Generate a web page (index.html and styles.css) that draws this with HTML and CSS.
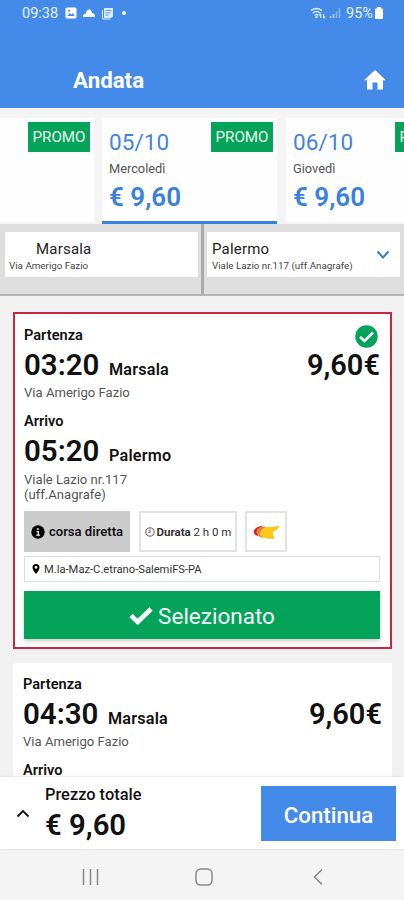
FILE: index.html
```
<!DOCTYPE html>
<html lang="it">
<head>
    <meta charset="UTF-8">
    <meta name="viewport" content="width=device-width, initial-scale=1.0">
    <title>Andata</title>
    <link rel="stylesheet" href="styles.css">
</head>
<body>
    <header>
        <div class="status">
            <span class="clock">09:38</span>
            <svg class="photo" width="12" height="12" viewBox="0 0 12 12"><rect x=".5" y=".5" width="11" height="11" rx="1.500" fill="#fff"/><path d="M2.500 9l2.200-3 1.600 1.800L7.800 6l2 3z" fill="#448ae8"/><circle cx="4" cy="3.700" r="1" fill="#448ae8"/></svg>
            <svg class="cloud" width="14" height="12" viewBox="0 0 14 12"><path d="M1 10Q1 6.500 4 6.500Q4.500 2.500 7 2.500Q9.500 2.500 10 6Q13 6.300 13 10z" fill="#fff"/></svg>
            <svg class="note" width="13" height="13" viewBox="0 0 13 13"><path d="M3 1h9v8.500l-2 1.500H3z" fill="#dcebff"/><path d="M1.500 3v9h8" fill="none" stroke="#dcebff"/><path d="M4.500 3.500h6M4.500 5.800h5M4.500 8h3" stroke="#448ae8" stroke-width=".8"/></svg>
            <span class="dot"></span>
            <svg class="wifi" width="19" height="14" viewBox="0 0 19 14"><path d="M2 4.700q5.500-4.500 11 0M3.700 7q3.800-3 7.600 0M5.500 9.200q2-1.500 4 0" fill="none" stroke="#d3ecf5" stroke-width="1.500"/><circle cx="7.500" cy="11" r="1.200" fill="#d3ecf5"/><path d="M11.700 12V8M11.700 7.500l-1.500 2M14.500 8v4M14.500 12.300l1.500-2" stroke="#d3ecf5" stroke-width="1.200"/></svg>
            <svg class="signal" width="12" height="12" viewBox="0 0 12 12"><path d="M1.500 11V9M4.500 11V7" stroke="#b9dcf3" stroke-width="1.500"/><path d="M7.500 11V4.500M10.500 11V1" stroke="#8abaf0" stroke-width="1.500"/></svg>
            <span class="percent">95%</span>
            <svg class="battery" width="8" height="12" viewBox="0 0 8 12"><path d="M2 0h4v1.500h1q1 0 1 1V11q0 1-1 1H1q-1 0-1-1V2.500q0-1 1-1h1z" fill="#fff"/></svg>
        </div>
        <div class="title">
            <h1>Andata</h1>
            <svg width="22" height="20" viewBox="0 0 22 20"><path d="M11 0L0 10.200h3V19q0 .5.500.5H8.500V12.500h5v7h5q.5 0 .5-.5v-8.800h3z" fill="#fff"/></svg>
        </div>
    </header>

    <div class="days">
        <div class="day first"><span class="promo">PROMO</span></div>
        <div class="day active">
            <div class="date">05/10</div>
            <div class="name">Mercoledì</div>
            <div class="price">€ 9,60</div>
            <span class="promo">PROMO</span>
        </div>
        <div class="day">
            <div class="date">06/10</div>
            <div class="name">Giovedì</div>
            <div class="price">€ 9,60</div>
            <span class="promo">PROMO</span>
        </div>
    </div>

    <div class="route">
        <div class="stop from">
            <div class="city">Marsala</div>
            <div class="street">Via Amerigo Fazio</div>
        </div>
        <div class="divider"></div>
        <div class="stop to">
            <div>
                <div class="city">Palermo</div>
                <div class="street">Viale Lazio nr.117 (uff.Anagrafe)</div>
            </div>
            <svg width="14" height="10" viewBox="0 0 14 10"><path d="M1.500 1.500L7 7.500l5.500-6" fill="none" stroke="#2b7ddb" stroke-width="2"/></svg>
        </div>
    </div>

    <main>
        <div class="card selected">
            <div class="label">Partenza</div>
            <div class="time"><b>03:20</b><span>Marsala</span><strong>9,60€</strong></div>
            <div class="address">Via Amerigo Fazio</div>
            <div class="label arrival">Arrivo</div>
            <div class="time"><b>05:20</b><span>Palermo</span></div>
            <div class="address end">Viale Lazio nr.117<br>(uff.Anagrafe)</div>
            <div class="chips">
                <div class="chip direct">
                    <svg width="14" height="14" viewBox="0 0 14 14"><circle cx="7" cy="7" r="6.700"/><path d="M6.900 3v2M5.500 6.500H7.300V10M5.300 10.300h3.600" fill="none" stroke="#ccc" stroke-width="1.600"/></svg>
                    <span>corsa diretta</span>
                </div>
                <div class="chip duration">
                    <svg width="10" height="10" viewBox="0 0 10 10"><circle cx="5" cy="5" r="4.200" fill="none" stroke="#444" stroke-width=".9"/><path d="M5 2.200V5.300H3.200" fill="none" stroke="#444" stroke-width=".9"/></svg>
                    <span><b>Durata</b> 2 h 0 m</span>
                </div>
                <div class="chip company">
                    <svg width="27" height="16" viewBox="0 0 27 16"><path d="M9 2Q1 3 .5 8q1 3 4 4L9 8z" fill="#d5212e"/><path d="M10 2.500Q3 4 3.500 9q2 4 6 5l3-6z" fill="#ee8a35"/><path d="M7 4Q12 2.500 16 3Q21 3 26.500 1.500Q25 6 20 8Q20 12 22 14.500Q10 16 6 10Q5 6 7 4z" fill="#fac91b"/><path d="M4 5q4-3 9-2.500L8 6Q6 9 7 11Q3 9 4 5z" fill="#e87842"/></svg>
                </div>
            </div>
            <div class="line">
                <svg width="8" height="10" viewBox="0 0 8 10"><path fill-rule="evenodd" d="M4 0a3.500 3.500 0 0 1 3.500 3.500Q7.500 5.500 4 10Q.5 5.500.5 3.500A3.500 3.500 0 0 1 4 0zM4 2a1.400 1.400 0 1 0 0 2.800A1.400 1.400 0 1 0 4 2z"/></svg>
                <span>M.la-Maz-C.etrano-SalemiFS-PA</span>
            </div>
            <div class="button">
                <svg width="24" height="18" viewBox="0 0 24 18"><path d="M2 8.500L8.700 15L22 2" fill="none" stroke="#fff" stroke-width="4.600"/></svg>
                <span>Selezionato</span>
            </div>
            <svg class="tick" width="23" height="23" viewBox="0 0 23 23"><circle cx="11.500" cy="11.500" r="11.200" fill="#05a25a"/><path d="M5 11.800l4.500 4.200L18 7.500" fill="none" stroke="#fff" stroke-width="2.500"/></svg>
        </div>
        <div class="card">
            <div class="label">Partenza</div>
            <div class="time"><b>04:30</b><span>Marsala</span><strong>9,60€</strong></div>
            <div class="address">Via Amerigo Fazio</div>
            <div class="label arrival">Arrivo</div>
        </div>
    </main>

    <footer>
        <svg width="14" height="9" viewBox="0 0 14 9"><path d="M1.500 7.500L7 2l5.500 5.500" fill="none" stroke="#111" stroke-width="1.800"/></svg>
        <div class="total">
            <div>Prezzo totale</div>
            <b>€ 9,60</b>
        </div>
        <div class="continue">Continua</div>
    </footer>

    <nav>
        <svg width="18" height="18" viewBox="0 0 18 18"><path d="M1.500 1v16M8.500 1v16M15.500 1v16" stroke="#888" stroke-width="1.500"/></svg>
        <svg width="18" height="18" viewBox="0 0 18 18"><rect x="1" y="1" width="16" height="16" rx="4.500" fill="none" stroke="#888" stroke-width="1.500"/></svg>
        <svg width="10" height="18" viewBox="0 0 10 18"><path d="M9 1.500L1.500 9L9 16.500" fill="none" stroke="#888" stroke-width="1.500"/></svg>
    </nav>
</body>
</html>
```
FILE: styles.css
```
* {
    box-sizing: border-box;
}
body {
    font-family: Roboto, sans-serif;
    margin: 0;
    height: 900px;
    display: flex;
    flex-direction: column;
    overflow: hidden;
    background: #f1f1f1;
    color: #111;
}
svg {
    display: block;
    flex: none;
}
header {
    height: 108px;
    flex: none;
    background: #448ae8;
    color: #fff;
}
.status {
    height: 26px;
    display: flex;
    align-items: center;
    padding: 0 21px 0 22px;
}
.clock {
    width: 37px;
    font-size: 14.5px;
    color: #e5f1ff;
}
.photo {
    margin-left: 6px;
}
.cloud {
    margin-left: 5px;
}
.note {
    margin-left: 5px;
}
.dot {
    width: 4px;
    height: 4px;
    margin-left: 8px;
    border-radius: 50%;
    background: #fff;
}
.wifi {
    margin-left: auto;
}
.signal {
    margin-left: 1px;
}
.percent {
    width: 29px;
    margin-left: 5px;
    font-size: 14.5px;
    color: #e5f1ff;
}
.title {
    height: 82px;
    display: flex;
    align-items: center;
    justify-content: space-between;
    padding: 26px 18px 0 73px;
}
h1 {
    margin: 0;
    font-size: 22.3px;
    font-weight: 700;
}

/* date tabs */
.days {
    height: 116px;
    flex: none;
    display: flex;
    gap: 8px;
    padding-top: 10px;
    background: #f4f4f4;
    overflow: hidden;
}
.day {
    position: relative;
    width: 175px;
    height: 104px;
    flex: none;
    padding: 10px 0 0 7px;
    background: #fefefe;
}
.day + .day + .day {
    margin-left: 1px;
}
.day.first {
    width: 94px;
}
.day.active {
    height: 106px;
    border-bottom: 3px solid #3a82e0;
}
.date {
    font-size: 22.5px;
    line-height: 28px;
    letter-spacing: 0.1px;
    color: #4384d8;
}
.name {
    font-size: 12.8px;
    line-height: 16px;
    margin-top: 5px;
    color: #555;
}
.price {
    font-size: 26px;
    line-height: 32px;
    margin-top: 4px;
    font-weight: 600;
    color: #3880dd;
}
.promo {
    position: absolute;
    top: 4px;
    right: 4px;
    width: 62px;
    height: 30px;
    background: #05a25a;
    color: #e6f7ee;
    font-size: 15.2px;
    line-height: 31px;
    text-align: center;
}

/* stops */
.route {
    height: 72px;
    flex: none;
    display: flex;
    background: #dedede;
    border-bottom: 2px solid #b5b5b5;
}
.stop {
    width: 193px;
    height: 45px;
    padding: 8px 0 0 4px;
    background: #fff;
}
.from {
    margin: 8px 3px 0 5px;
}
.divider {
    width: 3px;
    background: #aaa;
}
.to {
    display: flex;
    justify-content: space-between;
    margin: 8px 0 0 3px;
    padding: 8px 10px 0 5px;
}
.to svg {
    margin-top: 10px;
}
.city {
    font-size: 15px;
    line-height: 18px;
    letter-spacing: 0.2px;
    color: #222;
}
.from .city {
    padding-left: 27px;
}
.street {
    font-size: 9.8px;
    line-height: 15px;
    white-space: nowrap;
    color: #444;
}

/* trips */
main {
    flex: 1;
    min-height: 0;
    overflow: hidden;
    padding: 16px 12px 0 13px;
}
.card {
    position: relative;
    margin-bottom: 14px;
    padding: 11px 10px 0;
    background: #fff;
}
.selected {
    height: 337px;
    border: 2px solid #c8283c;
    padding: 11px 10px 0 9px;
}
.label {
    font-size: 14.6px;
    line-height: 20px;
    font-weight: 600;
}
.arrival {
    margin-top: 10px;
}
.time {
    height: 40px;
    display: flex;
    align-items: baseline;
    line-height: 41px;
}
.time b {
    width: 85px;
    font-size: 29.5px;
    font-weight: 600;
}
.time span {
    font-size: 16.2px;
    font-weight: 600;
    letter-spacing: 0.2px;
}
.time strong {
    margin-left: auto;
    font-size: 29px;
    font-weight: 600;
}
.address {
    font-size: 13.1px;
    line-height: 16px;
    color: #555;
}
.end {
    line-height: 15px;
    padding-top: 1px;
}
.chips {
    display: flex;
    margin-top: 9px;
}
.chip {
    height: 41px;
    display: flex;
    align-items: center;
    justify-content: center;
    border: 2px solid #e3e3e3;
    font-size: 11.5px;
    white-space: nowrap;
}
.direct {
    width: 106px;
    gap: 4px;
    border: none;
    background: #ccc;
    font-size: 13.1px;
    font-weight: 600;
}
.duration {
    width: 98px;
    gap: 2px;
    margin-left: 9px;
    color: #333;
}
.company {
    width: 42px;
    margin-left: 8px;
}
.line {
    height: 26px;
    margin-top: 4px;
    display: flex;
    align-items: center;
    gap: 4px;
    padding-left: 7px;
    border: 1px solid #ddd;
    font-size: 11.2px;
    color: #333;
}
.button {
    height: 48px;
    margin-top: 9px;
    display: flex;
    align-items: center;
    justify-content: center;
    gap: 5px;
    padding-top: 2px;
    background: #05a25a;
    box-shadow: 0 2px 4px #ccc;
    color: #f2fff8;
    font-size: 22.5px;
}
.tick {
    position: absolute;
    top: 11px;
    right: 12px;
}

footer {
    height: 72px;
    flex: none;
    display: flex;
    align-items: center;
    padding: 0 8px 0 16px;
    background: #fff;
    box-shadow: 0 0 2px #ccc;
    z-index: 1;
}
.total {
    margin-left: 15px;
    padding-top: 2px;
    font-size: 16.4px;
    line-height: 22px;
    font-weight: 500;
}
.total b {
    display: block;
    font-size: 29.3px;
    line-height: 39px;
    font-weight: 600;
}
.continue {
    width: 135px;
    height: 55px;
    margin-left: auto;
    background: #448ae8;
    color: #fff;
    font-size: 22.3px;
    line-height: 58px;
    font-weight: 500;
    text-align: center;
}
nav {
    height: 51px;
    flex: none;
    display: flex;
    align-items: center;
    padding: 4px 0 0 82px;
    background: #f4f4f4;
}
nav svg + svg {
    margin-left: 95px;
}
nav svg:last-child {
    margin-left: 100px;
}
```
